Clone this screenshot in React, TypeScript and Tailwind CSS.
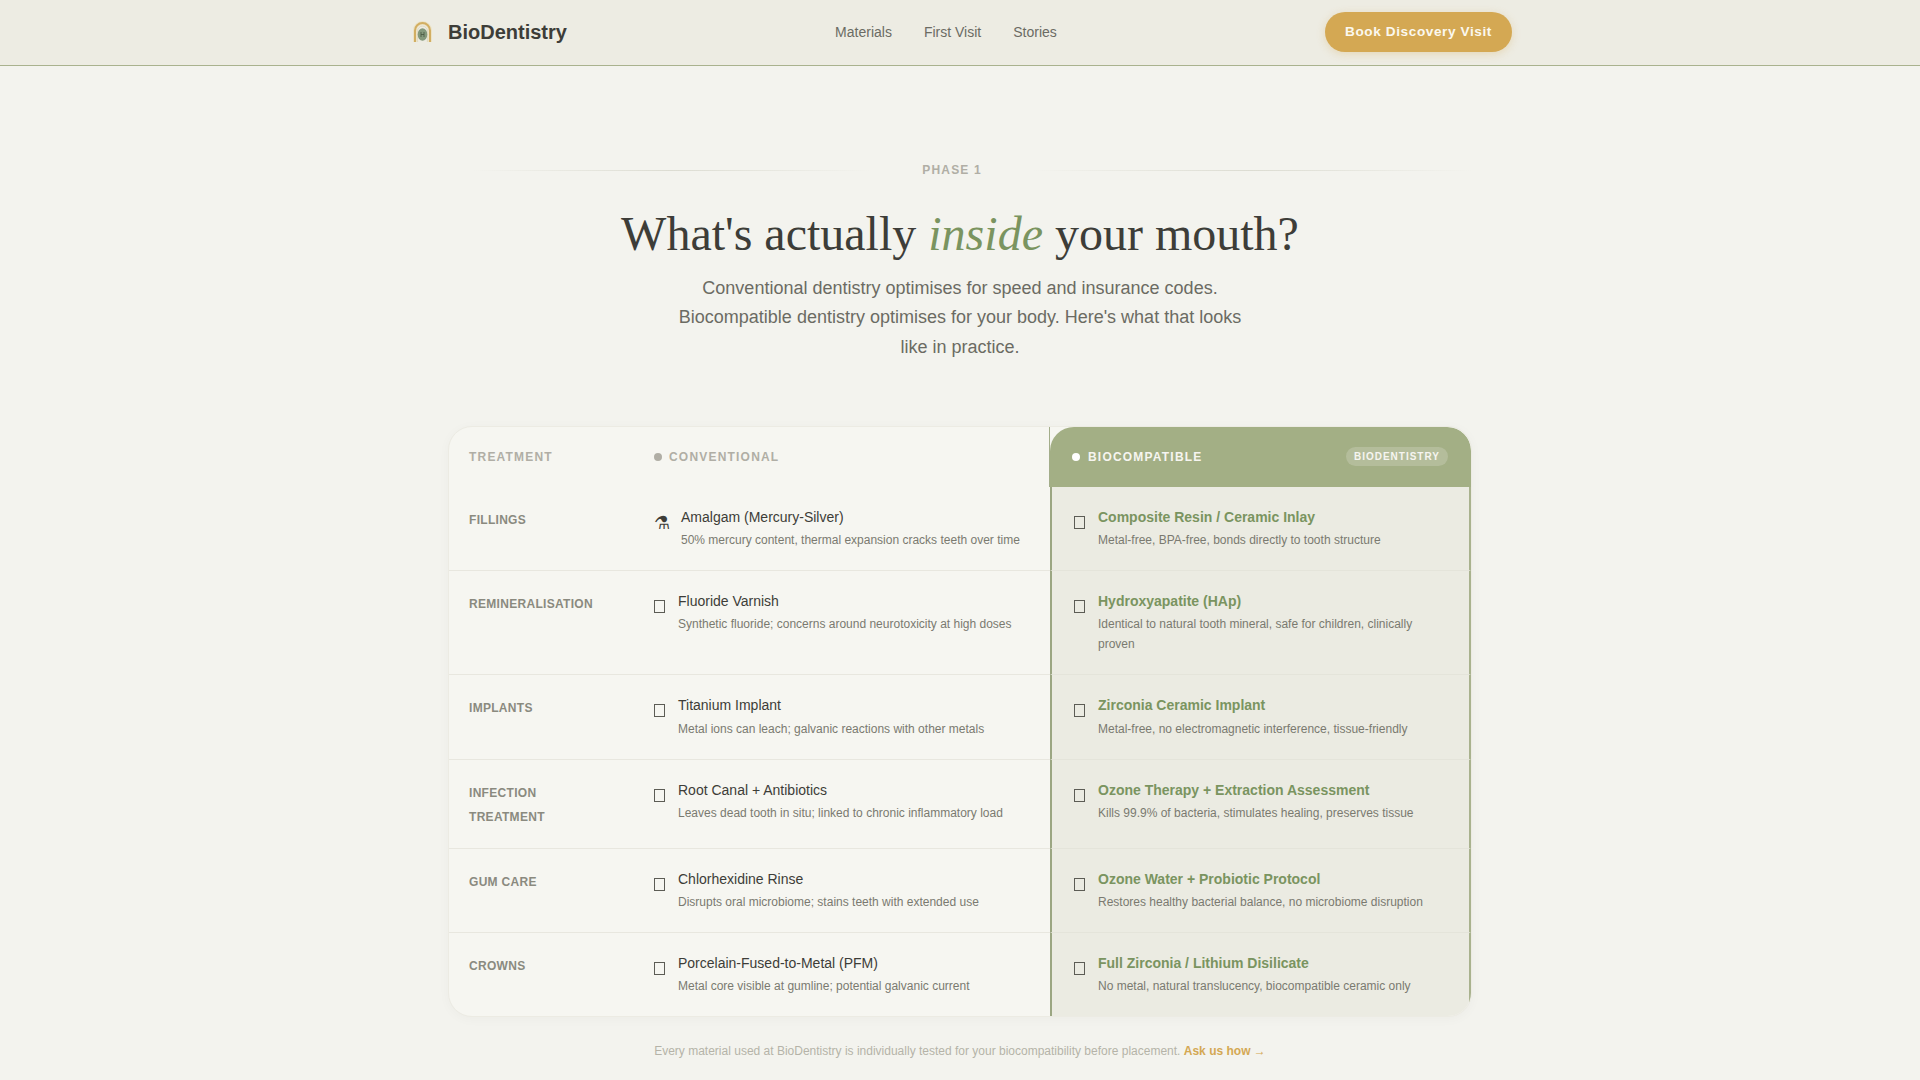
import React from "react";

type Row = {
  label: React.ReactNode;
  flask?: boolean;
  cName: string;
  cDesc: string;
  bName: string;
  bDesc: string;
};

const rows: Row[] = [
  { label: "Fillings", flask: true, cName: "Amalgam (Mercury-Silver)", cDesc: "50% mercury content, thermal expansion cracks teeth over time", bName: "Composite Resin / Ceramic Inlay", bDesc: "Metal-free, BPA-free, bonds directly to tooth structure" },
  { label: "Remineralisation", cName: "Fluoride Varnish", cDesc: "Synthetic fluoride; concerns around neurotoxicity at high doses", bName: "Hydroxyapatite (HAp)", bDesc: "Identical to natural tooth mineral, safe for children, clinically proven" },
  { label: "Implants", cName: "Titanium Implant", cDesc: "Metal ions can leach; galvanic reactions with other metals", bName: "Zirconia Ceramic Implant", bDesc: "Metal-free, no electromagnetic interference, tissue-friendly" },
  { label: <>Infection<br />Treatment</>, cName: "Root Canal + Antibiotics", cDesc: "Leaves dead tooth in situ; linked to chronic inflammatory load", bName: "Ozone Therapy + Extraction Assessment", bDesc: "Kills 99.9% of bacteria, stimulates healing, preserves tissue" },
  { label: "Gum Care", cName: "Chlorhexidine Rinse", cDesc: "Disrupts oral microbiome; stains teeth with extended use", bName: "Ozone Water + Probiotic Protocol", bDesc: "Restores healthy bacterial balance, no microbiome disruption" },
  { label: "Crowns", cName: "Porcelain-Fused-to-Metal (PFM)", cDesc: "Metal core visible at gumline; potential galvanic current", bName: "Full Zirconia / Lithium Disilicate", bDesc: "No metal, natural translucency, biocompatible ceramic only" },
];

function Logo() {
  return (
    <svg width="28" height="28" viewBox="0 0 28 28" fill="none">
      <path d="M7 24V12.5a7.5 7.5 0 0 1 15 0V24" stroke="#ece3c6" strokeWidth="4" />
      <path d="M7 24V12.5a7.5 7.5 0 0 1 15 0V24" stroke="#d2ae62" strokeWidth="2" />
      <path d="M9.6 24V13a4.9 4.9 0 0 1 9.8 0V24" stroke="#dcd4b8" strokeWidth="0.8" />
      <ellipse cx="14.5" cy="16.5" rx="4.8" ry="6.2" fill="#84997c" />
      <path d="M13 14v5M16 14v5M13 16.5h3" stroke="#46563f" strokeWidth="0.8" />
    </svg>
  );
}

function Tofu() {
  return (
    <span className="mt-[10px] w-[14px] shrink-0">
      <span className="block h-[13px] w-[11px] border border-[#5c5c55]" />
    </span>
  );
}

export default function App() {
  return (
    <div className="min-h-screen bg-[#f3f3ee] font-['Liberation_Sans',Arial,sans-serif] text-[#3d3d38]">
      <header className="h-[66px] border-b border-[#a9b28e] bg-[#edece3]">
        <div className="mx-auto flex h-[64px] max-w-[1200px] items-center justify-between px-12">
          <div className="flex items-center gap-3">
            <Logo />
            <span className="text-[20px] font-bold text-[#3d3d38]">BioDentistry</span>
          </div>
          <nav className="flex items-center gap-8 text-[14px] text-[#6b6b63]">
            <span>Materials</span>
            <span>First Visit</span>
            <span>Stories</span>
          </nav>
          <button className="h-[40px] rounded-full bg-[#d4a853] px-5 text-[13.6px] font-bold tracking-[0.6px] text-[#fbf8ef] shadow-[0_2px_8px_rgba(212,168,83,0.3)]">
            Book Discovery Visit
          </button>
        </div>
      </header>

      <main className="mx-auto flex max-w-[1024px] flex-col items-center pt-[95px]">
        <div className="grid w-full grid-cols-[1fr_auto_1fr] items-center gap-x-[50px]">
          <div className="h-px w-[400px] justify-self-end bg-gradient-to-r from-transparent via-[#dcdcd2] to-transparent" />
          <span className="text-[12px] leading-[18px] font-bold tracking-[0.1em] text-[#b0aea5]">PHASE 1</span>
          <div className="h-px w-[440px] justify-self-start bg-gradient-to-r from-transparent via-[#dcdcd2] to-transparent" />
        </div>

        <h1 className="mt-[26px] font-['Liberation_Serif','Times_New_Roman',serif] text-[48px] leading-[1.2] font-normal text-[#3d3d38]">
          What's actually <em className="text-[#7a9460]">inside</em> your mouth?
        </h1>

        <p className="mt-[11px] max-w-[580px] text-center text-[18px] leading-[1.65] text-[#6b6b63]">
          Conventional dentistry optimises for speed and insurance codes. Biocompatible dentistry optimises for your body. Here's what that looks like in practice.
        </p>

        <div className="mt-[63px] w-full overflow-hidden rounded-[24px] border border-[#ecebe3] bg-[#f6f6f1] shadow-[0_2px_12px_rgba(0,0,0,0.03)]">
          <div className="grid grid-cols-[181px_1fr_421px]">
            <div className="flex h-[60px] items-center px-5 text-[12px] font-bold tracking-[0.1em] text-[#b0aea5]">TREATMENT</div>
            <div className="flex h-[60px] items-center gap-[7px] border-r border-[#a3ad8a] px-6 text-[12px] font-bold tracking-[0.1em] text-[#b0aea5]">
              <span className="h-2 w-2 rounded-full bg-[#b0aea5]" />
              CONVENTIONAL
            </div>
            <div className="flex h-[60px] items-center justify-between rounded-t-[24px] bg-[#a3af85] pr-[23px] pl-[22px] text-[12px] font-bold tracking-[0.1em] text-[#f6f5f0]">
              <span className="flex items-center gap-2">
                <span className="h-2 w-2 rounded-full bg-white" />
                BIOCOMPATIBLE
              </span>
              <span className="rounded-full bg-[#b4bd9b] px-2 py-[2px] text-[10px] leading-[15px] tracking-[0.1em]">BIODENTISTRY</span>
            </div>
          </div>
          {rows.map((r, i) => (
            <div key={i} className="grid grid-cols-[181px_1fr_421px]">
              <div className={`px-5 pt-[21px] pb-[18px] text-[12px] leading-[24.5px] font-bold tracking-[0.025em] text-[#8a8a7f] uppercase ${i ? "border-t border-[#e8e7df]" : ""}`}>
                {r.label}
              </div>
              <div className={`flex items-start gap-[10px] px-6 pt-[19px] pb-5 ${i ? "border-t border-t-[#e8e7df]" : ""}`}>
                {r.flask ? <span className="mt-[6px] mr-px text-[18px] leading-[23px] text-[#3d3d38]">⚗</span> : <Tofu />}
                <div>
                  <div className="text-[14px] leading-[23.3px] text-[#3d3d38]">{r.cName}</div>
                  <div className="mt-px text-[12px] leading-[20px] text-[#7a7a70]">{r.cDesc}</div>
                </div>
              </div>
              <div className={`flex items-start gap-[10px] border-r-2 border-l-2 border-r-[#a9b28e] border-l-[#9ba682] bg-[#ebebe2] pt-[19px] pr-5 pb-5 pl-[22px] ${i ? "border-t border-t-[#e4e4da]" : ""}`}>
                <Tofu />
                <div>
                  <div className="text-[14px] leading-[23.3px] font-bold text-[#7a9460]">{r.bName}</div>
                  <div className="mt-px text-[12px] leading-[20px] text-[#7a7a70]">{r.bDesc}</div>
                </div>
              </div>
            </div>
          ))}
        </div>

        <p className="mt-[24px] text-center text-[12px] leading-[20px] text-[#b5b3a8]">
          Every material used at BioDentistry is individually tested for your biocompatibility before placement.{" "}
          <span className="font-bold text-[#d4a853]">Ask us how →</span>
        </p>
      </main>
    </div>
  );
}
